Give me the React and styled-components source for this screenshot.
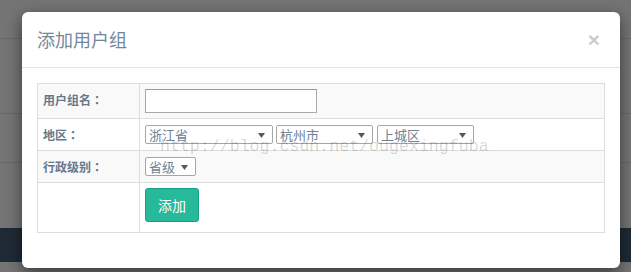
import React from "react";
import styled, { createGlobalStyle } from "styled-components";

const GlobalStyle = createGlobalStyle`
  html, body { margin: 0; padding: 0; }
  body {
    font-family: "Helvetica Neue", Roboto, Arial, "Noto Sans CJK SC", sans-serif;
    font-size: 13px;
    color: #73879c;
    text-spacing-trim: space-all;
  }
`;

const Stage = styled.div`
  position: relative;
  width: 631px;
  height: 272px;
  overflow: hidden;
  background: #747474;
  display: flex;
  flex-direction: column;
`;

const BgRow = styled.div`
  height: ${(p) => p.$h}px;
  flex: none;
  background: ${(p) => (p.$dark ? "#1f2a35" : "#747474")};
  border-bottom: ${(p) => (p.$line ? "1px solid #686868" : "none")};
`;

const Modal = styled.div`
  position: absolute;
  left: 22px;
  top: 12px;
  width: 598px;
  background: #fff;
  border-radius: 6px;
  box-shadow: 0 5px 15px rgba(0, 0, 0, 0.5);
`;

const Header = styled.div`
  display: flex;
  justify-content: space-between;
  align-items: flex-start;
  padding: 15px;
  border-bottom: 1px solid #e5e5e5;
`;

const Title = styled.h4`
  margin: 0;
  font-size: 18px;
  font-weight: 400;
  line-height: 25px;
  color: #73879c;
  font-family: "Noto Sans CJK SC", sans-serif;
`;

const Close = styled.button`
  border: 0;
  background: transparent;
  padding: 0;
  margin: 2px 5px 0 0;
  font-family: "Liberation Sans", Arial, sans-serif;
  font-size: 21px;
  font-weight: 700;
  line-height: 1;
  color: #000;
  opacity: 0.2;
  cursor: pointer;
`;

const Body = styled.div`
  padding: 15px;
`;

const Table = styled.table`
  width: 100%;
  border-collapse: collapse;
  border: 1px solid #ddd;
  margin-bottom: 20px;
  font-family: "Noto Sans CJK SC", sans-serif;
`;

const Row = styled.tr`
  background: ${(p) => (p.$striped ? "#f9f9f9" : "#fff")};
`;

const LabelCell = styled.th`
  width: 91px;
  padding: 5px;
  border: 1px solid #ddd;
  text-align: left;
  vertical-align: top;
  font-size: 12px;
  font-weight: 700;
  line-height: 21px;
  color: #66788b;
  white-space: nowrap;
`;

const Colon = styled.span`
  font-family: "Noto Sans CJK JP", sans-serif;
`;

const FieldCell = styled.td`
  padding: 5px;
  border: 1px solid #ddd;
  vertical-align: top;
  line-height: 21px;
`;

const Fields = styled.div`
  display: flex;
  align-items: center;
  gap: 3px;
  height: ${(p) => (p.$h ? p.$h + "px" : "auto")};
`;

const TextInput = styled.input`
  box-sizing: border-box;
  width: 172px;
  height: 24px;
  margin: 0;
  padding: 1px 3px;
  border: 1px solid #a9a9a9;
  border-top-color: #999;
  background: #fff;
  font-size: 13px;
  outline: none;
`;

const Select = styled.div`
  box-sizing: border-box;
  width: ${(p) => p.$w}px;
  height: 19px;
  margin-left: ${(p) => p.$ml || 0}px;
  padding: 0 7px 0 3px;
  display: flex;
  align-items: flex-end;
  justify-content: space-between;
  border: 1px solid #a6a6a6;
  border-radius: 2px;
  background: #fff;
  font-size: 13px;
  line-height: 16px;
  color: #6f8296;
  overflow: hidden;
`;

const Arrow = styled.svg`
  flex: none;
  align-self: center;
  margin-top: 1px;
`;

const Button = styled.button`
  box-sizing: border-box;
  height: 34px;
  margin: 0 0 5px 0;
  padding: 6px 12px;
  border: 1px solid #169f85;
  border-radius: 3px;
  background: #26b99a;
  color: #fff;
  font-family: "Noto Sans CJK SC", sans-serif;
  font-size: 14px;
  line-height: 20px;
  cursor: pointer;
`;

const Watermark = styled.div`
  position: absolute;
  left: 160px;
  top: 137px;
  font-family: "Liberation Mono", "DejaVu Sans Mono", monospace;
  font-size: 16.6px;
  line-height: 20px;
  color: rgba(0, 0, 0, 0.17);
  pointer-events: none;
  white-space: nowrap;
`;

function Dropdown({ w, ml, children }) {
  return (
    <Select $w={w} $ml={ml}>
      <span>{children}</span>
      <Arrow width="7" height="5" viewBox="0 0 7 5">
        <path d="M0 0 H7 L3.5 5 Z" fill="#4e5b69" />
      </Arrow>
    </Select>
  );
}

function Label({ children }) {
  return (
    <LabelCell>
      {children}
      <Colon>：</Colon>
    </LabelCell>
  );
}

export default function App() {
  return (
    <>
      <GlobalStyle />
      <Stage>
        <BgRow $h={38} $line />
        <BgRow $h={74} $line />
        <BgRow $h={48} $line />
        <BgRow $h={65} />
        <BgRow $h={34} $dark />
        <BgRow $h={10} />
        <Modal>
          <Header>
            <Title>添加用户组</Title>
            <Close aria-label="close">×</Close>
          </Header>
          <Body>
            <Table>
              <tbody>
                <Row $striped>
                  <Label>用户组名</Label>
                  <FieldCell>
                    <Fields>
                      <TextInput type="text" />
                    </Fields>
                  </FieldCell>
                </Row>
                <Row>
                  <Label>地区</Label>
                  <FieldCell>
                    <Fields $h={21}>
                      <Dropdown w={128}>浙江省</Dropdown>
                      <Dropdown w={97}>杭州市</Dropdown>
                      <Dropdown w={97} ml={1}>上城区</Dropdown>
                    </Fields>
                  </FieldCell>
                </Row>
                <Row $striped>
                  <Label>行政级别</Label>
                  <FieldCell>
                    <Fields $h={21}>
                      <Dropdown w={51}>省级</Dropdown>
                    </Fields>
                  </FieldCell>
                </Row>
                <Row>
                  <LabelCell />
                  <FieldCell>
                    <Fields>
                      <Button>添加</Button>
                    </Fields>
                  </FieldCell>
                </Row>
              </tbody>
            </Table>
          </Body>
        </Modal>
        <Watermark>http://blog.csdn.net/ougexingfuba</Watermark>
      </Stage>
    </>
  );
}
